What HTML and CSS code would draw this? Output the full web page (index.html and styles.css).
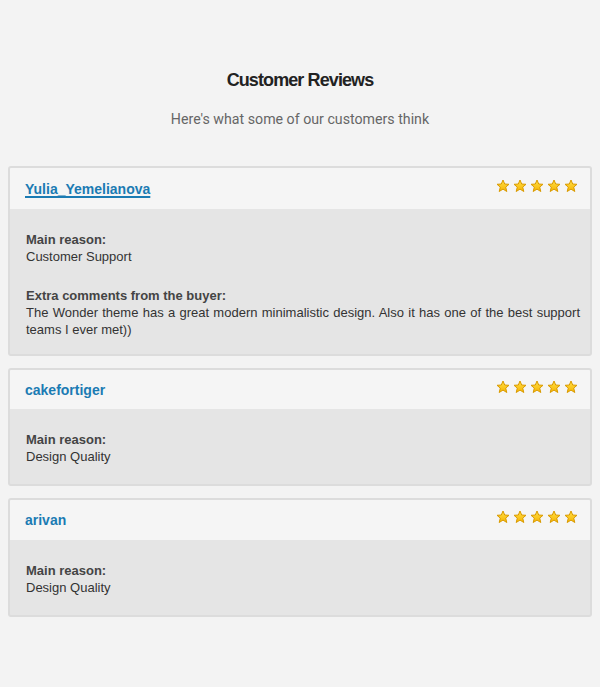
FILE: index.html
```html
<!DOCTYPE html>
<html lang="en">
<head>
    <meta charset="UTF-8">
    <title>Customer Reviews</title>
    <link rel="stylesheet" href="styles.css">
</head>
<body>
    <svg width="0" height="0" class="defs">
        <defs>
            <linearGradient id="starFill" x1="0" y1="0" x2="0" y2="1">
                <stop offset="0" stop-color="#ffe04a"/>
                <stop offset="1" stop-color="#f7b500"/>
            </linearGradient>
            <symbol id="star" viewBox="0 0 14 14">
                <path d="M7 1 L8.7 5 L13 5.3 L9.7 8.1 L10.8 12.5 L7 10.1 L3.2 12.5 L4.3 8.1 L1 5.3 L5.3 5 Z" fill="url(#starFill)" stroke="#d99a00" stroke-width="1" stroke-linejoin="round"/>
            </symbol>
        </defs>
    </svg>

    <header class="intro">
        <h1>Customer Reviews</h1>
        <p>Here's what some of our customers think</p>
    </header>

    <div class="reviews">
        <!-- review 1 -->
        <div class="review">
            <div class="review-head">
                <a href="#" class="author underlined">Yulia_Yemelianova</a>
                <span class="stars">
                    <svg><use href="#star"/></svg><svg><use href="#star"/></svg><svg><use href="#star"/></svg><svg><use href="#star"/></svg><svg><use href="#star"/></svg>
                </span>
            </div>
            <div class="review-body">
                <div class="field">
                    <strong>Main reason:</strong>
                    <span>Customer Support</span>
                </div>
                <div class="field">
                    <strong>Extra comments from the buyer:</strong>
                    <span class="comment">The Wonder theme has a great modern minimalistic design. Also it has one of the best support teams I ever met))</span>
                </div>
            </div>
        </div>

        <!-- review 2 -->
        <div class="review">
            <div class="review-head short">
                <a href="#" class="author">cakefortiger</a>
                <span class="stars">
                    <svg><use href="#star"/></svg><svg><use href="#star"/></svg><svg><use href="#star"/></svg><svg><use href="#star"/></svg><svg><use href="#star"/></svg>
                </span>
            </div>
            <div class="review-body">
                <div class="field">
                    <strong>Main reason:</strong>
                    <span>Design Quality</span>
                </div>
            </div>
        </div>

        <!-- review 3 -->
        <div class="review">
            <div class="review-head mid">
                <a href="#" class="author">arivan</a>
                <span class="stars">
                    <svg><use href="#star"/></svg><svg><use href="#star"/></svg><svg><use href="#star"/></svg><svg><use href="#star"/></svg><svg><use href="#star"/></svg>
                </span>
            </div>
            <div class="review-body">
                <div class="field">
                    <strong>Main reason:</strong>
                    <span>Design Quality</span>
                </div>
            </div>
        </div>
    </div>
</body>
</html>
```

FILE: styles.css
```css
* {
    box-sizing: border-box;
    margin: 0;
    padding: 0;
}

body {
    background-color: #f3f3f3;
    color: #333;
    font-family: 'Liberation Sans', Arial, sans-serif;
    padding: 0 8px;
}

.defs {
    position: absolute;
}

.intro {
    text-align: center;
    padding-top: 69px;
    padding-bottom: 38px;
}

.intro h1 {
    font-family: 'Liberation Sans', Arial, sans-serif;
    font-size: 18px;
    font-weight: bold;
    letter-spacing: -0.9px;
    color: #222;
    line-height: 22px;
}

.intro p {
    font-family: Roboto, sans-serif;
    font-size: 14.2px;
    color: #666;
    margin-top: 19px;
    line-height: 18px;
}

.reviews {
    display: flex;
    flex-direction: column;
    gap: 12px;
    width: 584px;
}

.review {
    border: 2px solid #dcdcdc;
    border-radius: 3px;
    background-color: #e5e5e5;
    overflow: hidden;
}

.review-head {
    display: flex;
    justify-content: space-between;
    align-items: center;
    height: 41px;
    padding: 0 12px 0 15px;
    background-color: #f5f5f5;
}

.review-head.short {
    height: 39px;
}

.review-head.mid {
    height: 40px;
}

.author {
    font-size: 14px;
    font-weight: bold;
    color: #1b7bb3;
    text-decoration: none;
}

.author.underlined {
    text-decoration: underline;
    text-decoration-thickness: 2px;
    text-underline-offset: 2px;
}

.stars {
    display: flex;
    gap: 3px;
    margin-top: -6px;
}

.stars svg {
    width: 14px;
    height: 14px;
}

.review-body {
    min-height: 75px;
    padding: 22px 10px 16px 16px;
    font-size: 13px;
    line-height: 17px;
}

.field {
    display: flex;
    flex-direction: column;
}

.field + .field {
    margin-top: 22px;
}

.field strong {
    color: #444;
}

.comment {
    text-align: justify;
}
```
